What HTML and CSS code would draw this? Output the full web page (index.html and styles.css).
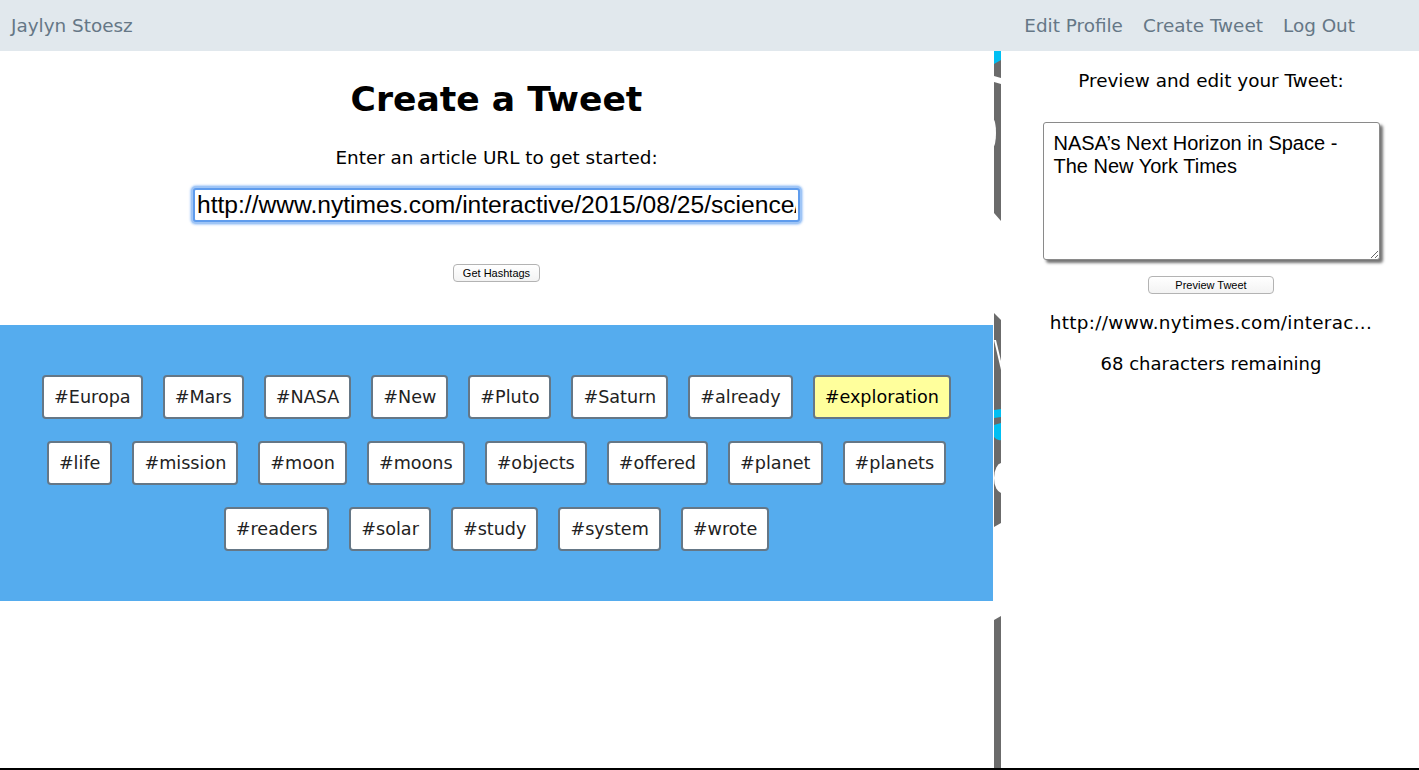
FILE: index.html
```html
<!DOCTYPE html>
<html lang="en">
<head>
<meta charset="utf-8">
<title>Create a Tweet</title>
<link rel="stylesheet" href="styles.css">
</head>
<body>
<div class="page">
  <header class="topbar">
    <div class="brand">Jaylyn Stoesz</div>
    <nav class="nav">
      <a class="nav-link">Edit Profile</a>
      <a class="nav-link">Create Tweet</a>
      <a class="nav-link">Log Out</a>
    </nav>
  </header>
  <div class="main">
    <section class="left">
      <h1 class="title">Create a Tweet</h1>
      <p class="prompt">Enter an article URL to get started:</p>
      <div class="url-row">
        <input class="url-input" type="text" value="http://www.nytimes.com/interactive/2015/08/25/science/space/nasa-next-mission.html">
      </div>
      <div class="btn-row">
        <button class="small-btn">Get Hashtags</button>
      </div>
      <div class="tags">
        <span class="tag">#Europa</span>
        <span class="tag">#Mars</span>
        <span class="tag">#NASA</span>
        <span class="tag">#New</span>
        <span class="tag">#Pluto</span>
        <span class="tag">#Saturn</span>
        <span class="tag">#already</span>
        <span class="tag tag-selected">#exploration</span>
        <span class="tag">#life</span>
        <span class="tag">#mission</span>
        <span class="tag">#moon</span>
        <span class="tag">#moons</span>
        <span class="tag">#objects</span>
        <span class="tag">#offered</span>
        <span class="tag">#planet</span>
        <span class="tag">#planets</span>
        <span class="tag">#readers</span>
        <span class="tag">#solar</span>
        <span class="tag">#study</span>
        <span class="tag">#system</span>
        <span class="tag">#wrote</span>
      </div>
    </section>
    <div class="divider">
      <svg class="divider-art" viewBox="0 0 8 717" preserveAspectRatio="none" aria-hidden="true">
        <rect x="0" y="0" width="8" height="717" fill="#ffffff"/>
        <rect x="1" y="0" width="7" height="717" fill="#6b6b6b"/>
        <polygon points="1,0 8,0 8,9 1,13" fill="#00bff3"/>
        <polygon points="1,25 8,27 8,33 1,31" fill="#ffffff"/>
        <ellipse cx="0" cy="82" rx="3" ry="14" fill="#ffffff"/>
        <polygon points="1,162 8,170 8,269 1,262" fill="#ffffff"/>
        <polygon points="1,289 3,289 8,310 8,319" fill="#ffffff"/>
        <path d="M1,359 L8,358 L8,366 L1,367 Z M1,374 L8,372 L8,389 Q4,390 1,386 Z" fill="#00bff3"/>
        <ellipse cx="9" cy="427" rx="8" ry="15" fill="#ffffff"/>
        <polygon points="1,476 8,472 8,565 1,569" fill="#ffffff"/>
      </svg>
    </div>
    <aside class="right">
      <p class="preview-label">Preview and edit your Tweet:</p>
      <div class="ta-row">
        <textarea class="tweet-text">NASA’s Next Horizon in Space - The New York Times</textarea>
      </div>
      <div class="btn-row-right">
        <button class="small-btn preview-btn">Preview Tweet</button>
      </div>
      <p class="preview-url">http://www.nytimes.com/interac...</p>
      <p class="preview-count">68 characters remaining</p>
    </aside>
  </div>
  <div class="bottom-line"></div>
</div>
</body>
</html>
```

FILE: styles.css
```css
html, body {
  margin: 0;
  padding: 0;
  background: #ffffff;
}

body {
  font-family: "DejaVu Sans", "Noto Sans", sans-serif;
  color: #000000;
}

.page {
  display: flex;
  flex-direction: column;
  height: 770px;
  overflow: hidden;
}

.topbar {
  flex: 0 0 51px;
  height: 51px;
  background: #e1e8ed;
  display: flex;
  align-items: center;
  justify-content: space-between;
  padding: 0 64px 0 11px;
  color: #657786;
  font-size: 18.4px;
}

.brand {
  line-height: 22px;
}

.nav {
  display: flex;
  gap: 20px;
}

.nav-link {
  color: #657786;
  text-decoration: none;
  line-height: 22px;
}

.main {
  flex: 1 1 auto;
  display: flex;
  min-height: 0;
}

.left {
  width: 993px;
  flex: 0 0 993px;
  background: #ffffff;
}

.title {
  margin: 28px 0 0;
  font-size: 34.6px;
  line-height: 40px;
  font-weight: bold;
  text-align: center;
}

.prompt {
  margin: 28px 0 0;
  font-size: 18.4px;
  line-height: 22px;
  text-align: center;
}

.url-row {
  display: flex;
  justify-content: center;
  margin-top: 19px;
}

.url-input {
  width: 607px;
  height: 34px;
  box-sizing: border-box;
  border: 2px solid #5f9ced;
  border-radius: 3px;
  padding: 0 2px;
  font-family: "Liberation Sans", Arial, sans-serif;
  font-size: 24.6px;
  color: #000000;
  outline: none;
  box-shadow: 0 0 0 2px #9fc5f6, 0 0 2px 3px rgba(130, 180, 245, 0.6);
}

.btn-row {
  display: flex;
  justify-content: center;
  margin-top: 42px;
}

.small-btn {
  font-family: "Liberation Sans", Arial, sans-serif;
  font-size: 11px;
  line-height: 14px;
  height: 18px;
  padding: 0 9px;
  color: #000000;
  background: linear-gradient(#ffffff, #f3f3f3);
  border: 1px solid #b3b3b3;
  border-radius: 4px;
}

.tags {
  margin-top: 43px;
  background: #55acee;
  padding: 50px 40px;
  display: flex;
  flex-wrap: wrap;
  justify-content: center;
  gap: 22px 20px;
}

.tag {
  display: inline-block;
  box-sizing: border-box;
  height: 44px;
  padding: 0 10px;
  line-height: 40px;
  font-size: 17.6px;
  color: #222222;
  background: #ffffff;
  border: 2px solid #657786;
  border-radius: 4px;
}

.tag-selected {
  background: #ffff9c;
  color: #000000;
}

.divider {
  flex: 0 0 8px;
  width: 8px;
  display: flex;
}

.divider-art {
  width: 8px;
  height: 100%;
  display: block;
}

.right {
  flex: 1 1 auto;
  background: #ffffff;
  display: flex;
  flex-direction: column;
  align-items: center;
  padding-left: 2px;
}

.preview-label {
  margin: 19px 0 0;
  font-size: 18.4px;
  line-height: 22px;
  text-align: center;
}

.ta-row {
  margin-top: 30px;
  display: flex;
  justify-content: center;
}

.tweet-text {
  width: 337px;
  height: 138px;
  box-sizing: border-box;
  border: 1px solid #8a8a8a;
  border-radius: 3px;
  padding: 9px 10px;
  font-family: "Liberation Sans", Arial, sans-serif;
  font-size: 20px;
  line-height: 23px;
  color: #000000;
  box-shadow: 3px 3px 3px rgba(0, 0, 0, 0.55);
  resize: both;
  outline: none;
}

.btn-row-right {
  margin-top: 16px;
  display: flex;
  justify-content: center;
}

.preview-btn {
  width: 126px;
}

.preview-url {
  margin: 18px 0 0;
  font-size: 18.4px;
  line-height: 22px;
  letter-spacing: 0.3px;
  text-align: center;
}

.preview-count {
  margin: 19px 0 0;
  font-size: 18px;
  line-height: 22px;
  text-align: center;
}

.bottom-line {
  flex: 0 0 2px;
  height: 2px;
  background: #000000;
}
```
